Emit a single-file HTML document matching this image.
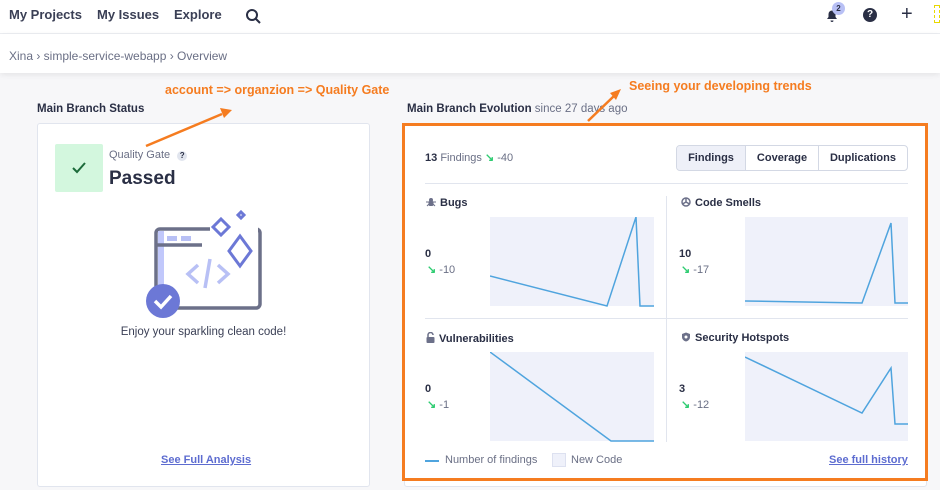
<!DOCTYPE html>
<html><head><meta charset="utf-8"><style>
*{box-sizing:border-box;margin:0;padding:0}
body{width:940px;height:490px;overflow:hidden;background:#f7f7f9;font-family:"Liberation Sans",sans-serif;position:relative;color:#2a2f45}
.a{position:absolute}
.nav{left:0;top:0;width:940px;height:34px;background:#fff;border-bottom:1px solid #eceef2}
.nav span{position:absolute;top:7px;font-size:13px;font-weight:bold;color:#3a3f55}
.bc{left:0;top:34px;width:940px;height:39px;background:#fff;box-shadow:0 2px 6px rgba(0,0,0,.08);font-size:12px;color:#6a6f85;padding:15px 0 0 9px}
.card{background:#fff;border:1px solid #e1e5ee;border-radius:3px}
.h{font-size:11.5px;font-weight:bold;color:#2a2f45}
.or{color:#f57c20;font-weight:bold;font-size:12.5px}
.t{font-size:11px;font-weight:bold;color:#2a2f45}
.t svg{vertical-align:-1px;margin-right:4px}
.n{font-size:11px;font-weight:bold}
.d{font-size:11px;color:#6a6f85}
.d b{color:#2ecc71;font-weight:bold}
.lk{color:#5d6cd0;font-weight:bold;font-size:11px;text-decoration:underline}
</style></head><body>
<div class="a nav"><span style="left:9px">My Projects</span><span style="left:97px">My Issues</span><span style="left:174px">Explore</span>
<svg class="a" style="left:245px;top:8px" width="16" height="16" viewBox="0 0 16 16"><circle cx="7" cy="7" r="5" fill="none" stroke="#2a2f45" stroke-width="2"/><path d="M11 11l4 4" stroke="#2a2f45" stroke-width="2"/></svg>
<svg class="a" style="left:824px;top:7px" width="16" height="16" viewBox="0 0 16 16"><path d="M3 12h10l-1.5-2V7a3.5 3.5 0 0 0-7 0v3z M6.5 13.5a1.5 1.5 0 0 0 3 0z" fill="#2a2f45"/></svg>
<div class="a" style="left:832px;top:2px;width:13px;height:13px;border-radius:50%;background:#b8c0f5;font-size:8px;font-weight:bold;color:#2a2f45;text-align:center;line-height:13px">2</div>
<div class="a" style="left:863px;top:8px;width:14px;height:14px;border-radius:50%;background:#2a2f45;color:#fff;font-size:10px;font-weight:bold;text-align:center;line-height:14px">?</div>
<div class="a" style="left:901px;top:3px;font-size:20px;color:#2a2f45;line-height:22px">+</div>
<div class="a" style="left:934px;top:5px;width:6px;height:18px;border:1px dashed #e8d800"></div>
</div>
<div class="a bc">Xina › simple-service-webapp › Overview</div>

<div class="a or" style="left:165px;top:83px">account =&gt; organzion =&gt; Quality Gate</div>
<div class="a or" style="left:629px;top:79px">Seeing your developing trends</div>
<div class="a h" style="left:37px;top:103px">Main Branch Status</div>
<div class="a h" style="left:407px;top:103px">Main Branch Evolution <span style="font-weight:normal;color:#6a6f85">since 27 days ago</span></div>

<div class="a card" style="left:37px;top:123px;width:333px;height:364px"></div>
<div class="a" style="left:55px;top:144px;width:48px;height:48px;background:#d3f7de;border-radius:2px"></div>
<svg class="a" style="left:71px;top:161px" width="16" height="14" viewBox="0 0 16 14"><path d="M2 7l4 4 8-9" fill="none" stroke="#1c6b3a" stroke-width="2"/></svg>
<div class="a" style="left:109px;top:149px;font-size:11px;color:#6a6f85">Quality Gate <span style="display:inline-block;width:10px;height:10px;border-radius:50%;background:#e1e5ee;font-size:8px;text-align:center;line-height:10px;font-weight:bold;color:#2a2f45;margin-left:4px">?</span></div>
<div class="a" style="left:109px;top:168px;font-size:19px;font-weight:bold;color:#2a2f45">Passed</div>
<svg class="a" style="left:140px;top:205px" width="130" height="120" viewBox="0 0 130 120">
<rect x="16" y="24" width="104" height="79" rx="4" fill="none" stroke="#6c7089" stroke-width="3.5"/>
<rect x="18" y="26" width="6" height="75" fill="#c1c8fb"/>
<line x1="16" y1="40" x2="62" y2="40" stroke="#6c7089" stroke-width="3.5"/>
<rect x="27" y="31" width="10" height="5" fill="#b8c0f5"/><rect x="41" y="31" width="10" height="5" fill="#b8c0f5"/>
<rect x="70" y="20" width="48" height="14" fill="#fff"/><rect x="70" y="30" width="40" height="36" fill="#fff"/>
<path d="M58 60l-10 9 10 9M78 60l10 9-10 9M70 54l-5 29" fill="none" stroke="#b8c0f5" stroke-width="3.5"/>
<path d="M81 14l8 8-8 8-8-8z M100 31l11 15-11 15-11-15z M101 7l3 3-3 3-3-3z" fill="none" stroke="#6c78d6" stroke-width="3"/>
<circle cx="23" cy="96" r="17" fill="#6c78d6"/><path d="M15 96l6 6 10-11" fill="none" stroke="#fff" stroke-width="3.5"/>
</svg>
<div class="a" style="left:37px;top:326px;width:333px;text-align:center;font-size:11.5px;color:#3a3f55">Enjoy your sparkling clean code!</div>
<div class="a lk" style="left:161px;top:454px">See Full Analysis</div>

<div class="a card" style="left:404px;top:123px;width:523px;height:364px"></div>
<div class="a" style="left:402px;top:123px;width:526px;height:358px;border:3px solid #f57c20"></div>
<div class="a" style="left:425px;top:151px;font-size:11px"><b>13</b> <span style="color:#6a6f85">Findings</span> <span class="d"><b>↘</b> -40</span></div>
<div class="a" style="left:676px;top:145px;width:232px;height:26px;border:1px solid #d3d8e4;border-radius:4px;font-size:11px;font-weight:bold;display:flex;overflow:hidden">
<div style="width:69px;background:#eef0f8;border-right:1px solid #d3d8e4;text-align:center;line-height:25px">Findings</div>
<div style="width:73px;border-right:1px solid #d3d8e4;text-align:center;line-height:25px">Coverage</div>
<div style="flex:1;text-align:center;line-height:25px">Duplications</div></div>
<div class="a" style="left:425px;top:183px;width:483px;height:1px;background:#e1e5ee"></div>
<div class="a" style="left:425px;top:318px;width:483px;height:1px;background:#e1e5ee"></div>
<div class="a" style="left:666px;top:196px;width:1px;height:246px;background:#e1e5ee"></div>

<div class="a t" style="left:426px;top:197px"><svg width="10" height="10" viewBox="0 0 10 10"><circle cx="5" cy="3" r="2" fill="#6c7089"/><rect x="2.5" y="4" width="5" height="5" rx="1.5" fill="#6c7089"/><path d="M0 5h10M1 9l2-2M9 9l-2-2" stroke="#6c7089"/></svg>Bugs</div>
<div class="a t" style="left:681px;top:197px"><svg width="10" height="10" viewBox="0 0 10 10"><circle cx="5" cy="5" r="4" fill="none" stroke="#6c7089" stroke-width="1.5"/><path d="M5 1v4M5 5l-3.5 2M5 5l3.5 2" stroke="#6c7089" stroke-width="1.5"/></svg>Code Smells</div>
<div class="a t" style="left:426px;top:332px"><svg width="9" height="11" viewBox="0 0 9 11"><path d="M2 5V3a2.5 2.5 0 0 1 5 0" fill="none" stroke="#6c7089" stroke-width="1.5"/><rect x="0.5" y="5" width="8" height="6" rx="1" fill="#6c7089"/></svg>Vulnerabilities</div>
<div class="a t" style="left:681px;top:332px"><svg width="10" height="10" viewBox="0 0 10 10"><path d="M5 0.5l4 1.5v3c0 2.5-2 4-4 4.5C3 9 1 7.5 1 5V2z" fill="#6c7089"/><circle cx="5" cy="5" r="1.5" fill="#fff"/></svg>Security Hotspots</div>

<div class="a n" style="left:425px;top:248px">0</div><div class="a d" style="left:427px;top:263px"><b>↘</b> -10</div>
<div class="a n" style="left:679px;top:248px">10</div><div class="a d" style="left:681px;top:263px"><b>↘</b> -17</div>
<div class="a n" style="left:425px;top:383px">0</div><div class="a d" style="left:427px;top:398px"><b>↘</b> -1</div>
<div class="a n" style="left:679px;top:383px">3</div><div class="a d" style="left:681px;top:398px"><b>↘</b> -12</div>

<svg class="a" style="left:490px;top:217px" width="164" height="90"><rect width="164" height="89" fill="#eff1fa"/><polyline points="0,59 117,89 146,0 150,89 164,89" fill="none" stroke="#4fa4de" stroke-width="1.5"/></svg>
<svg class="a" style="left:745px;top:217px" width="163" height="90"><rect width="163" height="89" fill="#eff1fa"/><polyline points="0,84 117,86 146,6 150,86 163,86" fill="none" stroke="#4fa4de" stroke-width="1.5"/></svg>
<svg class="a" style="left:490px;top:352px" width="164" height="90"><rect width="164" height="89" fill="#eff1fa"/><polyline points="0,0 121,89 164,89" fill="none" stroke="#4fa4de" stroke-width="1.5"/></svg>
<svg class="a" style="left:745px;top:352px" width="163" height="90"><rect width="163" height="89" fill="#eff1fa"/><polyline points="0,5 117,61 146,16 150,72 163,72" fill="none" stroke="#4fa4de" stroke-width="1.5"/></svg>

<div class="a" style="left:425px;top:460px;width:14px;height:2px;background:#4fa4de"></div>
<div class="a d" style="left:445px;top:454px">Number of findings</div>
<div class="a" style="left:552px;top:453px;width:14px;height:14px;background:#eff1fa;border:1px solid #dde1f0"></div>
<div class="a d" style="left:571px;top:454px">New Code</div>
<div class="a lk" style="left:829px;top:454px">See full history</div>

<svg class="a" style="left:0;top:0" width="940" height="490"><g stroke="#f57c20" stroke-width="2.5" fill="#f57c20">
<line x1="146" y1="146" x2="222" y2="114"/><path d="M232 110l-12 -2 4 10z" stroke="none"/>
<line x1="588" y1="121" x2="614" y2="96"/><path d="M621 89l-11 4 6 7z" stroke="none"/></g></svg>
</body></html>
